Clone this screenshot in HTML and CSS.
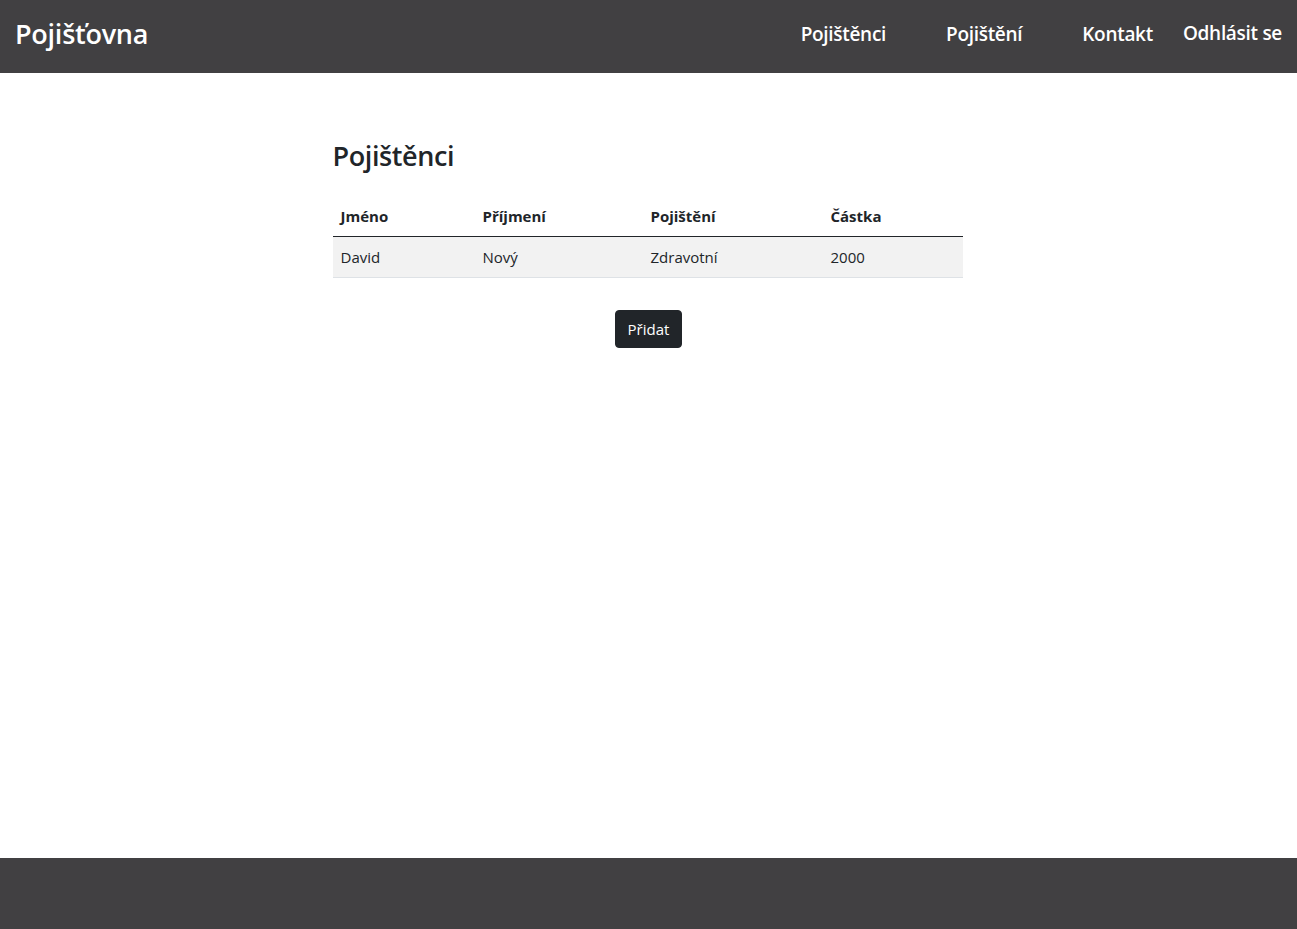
FILE: index.html
```html
<!DOCTYPE html>
<html lang="cs">
<head>
<meta charset="utf-8">
<title>Pojišťovna</title>
<link rel="stylesheet" href="styles.css">
</head>
<body>
<div class="page">
  <header class="topbar">
    <a class="brand" href="#">Pojišťovna</a>
    <nav class="nav">
      <a class="nav-link" href="#">Pojištěnci</a>
      <a class="nav-link" href="#">Pojištění</a>
      <a class="nav-link" href="#">Kontakt</a>
      <a class="nav-link logout" href="#">Odhlásit se</a>
    </nav>
  </header>
  <main class="content">
    <h2 class="title">Pojištěnci</h2>
    <table class="grid">
      <thead>
        <tr>
          <th class="c1">Jméno</th>
          <th class="c2">Příjmení</th>
          <th class="c3">Pojištění</th>
          <th class="c4">Částka</th>
        </tr>
      </thead>
      <tbody>
        <tr>
          <td>David</td>
          <td>Nový</td>
          <td>Zdravotní</td>
          <td>2000</td>
        </tr>
      </tbody>
    </table>
    <div class="actions">
      <button class="btn" type="button">Přidat</button>
    </div>
  </main>
  <footer class="footer"></footer>
</div>
</body>
</html>
```

FILE: styles.css
```css
* { box-sizing: border-box; }
html, body { margin: 0; padding: 0; }
body {
  font-family: "Open Sans", "Noto Sans", sans-serif;
  color: #212529;
  background: #fff;
}
.page {
  min-height: 929px;
  display: flex;
  flex-direction: column;
}
.topbar {
  height: 73px;
  background: #414042;
  display: flex;
  align-items: center;
  justify-content: space-between;
  padding: 0 15px 6px;
}
.brand {
  color: #fff;
  text-decoration: none;
  font-size: 27px;
  font-weight: 600;
  letter-spacing: -0.25px;
}
.nav {
  display: flex;
  align-items: center;
}
.nav-link {
  color: #fff;
  text-decoration: none;
  font-size: 19px;
  font-weight: 600;
  margin-left: 60px;
  letter-spacing: -0.3px;
}
.nav-link:first-child { margin-left: 0; }
.nav-link.logout { margin-left: 30px; position: relative; top: -1px; }
.content {
  flex: 1;
  width: 630px;
  margin: 0 auto;
  padding-top: 64px;
  position: relative;
  left: -1px;
}
.title {
  margin: 0 0 21px;
  font-size: 27px;
  font-weight: 600;
  line-height: 38px;
  letter-spacing: -0.4px;
}
.grid {
  width: 100%;
  border-collapse: collapse;
  font-size: 15px;
}
.grid th, .grid td {
  text-align: left;
  padding: 8px;
  line-height: 24px;
}
.grid th {
  font-weight: 700;
  border-bottom: 1px solid #212529;
}
.grid td {
  background: #f2f2f2;
  border-bottom: 1px solid #dee2e6;
}
.c1 { width: 142px; }
.c2 { width: 168px; }
.c3 { width: 180px; }
.c4 { width: 140px; }
.actions {
  display: flex;
  justify-content: center;
  margin-top: 32px;
}
.btn {
  background: #212529;
  color: #fff;
  border: 1px solid #212529;
  border-radius: 4px;
  font-family: inherit;
  font-size: 15px;
  height: 38px;
  padding: 0 12px;
  line-height: 24px;
  position: relative;
  left: 1px;
}
.footer {
  height: 71px;
  background: #414042;
}
```
